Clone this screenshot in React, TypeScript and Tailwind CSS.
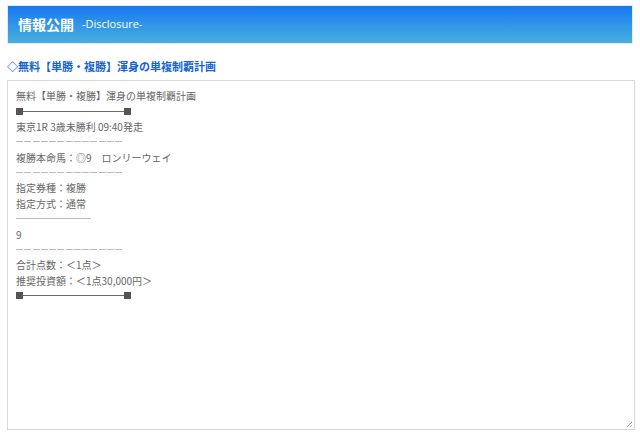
import React from "react";

const jp = { fontFamily: '"Noto Sans CJK JP", "Noto Sans", sans-serif' };

function Dash({ w }: { w: number }) {
  return (
    <div className="flex h-[15.4px] items-center">
      <div className="flex gap-[1.25px]">
        {Array.from({ length: w }).map((_, i) => (
          <span key={i} className="block h-px w-[7px] bg-[#bbbbbb]" />
        ))}
      </div>
    </div>
  );
}

function Solid({ w }: { w: number }) {
  return (
    <div className="flex h-[15.4px] items-center">
      <div className="h-px bg-[#bdbdbd]" style={{ width: w }} />
    </div>
  );
}

function Bar() {
  return (
    <div className="flex h-[15.4px] items-center">
      <span className="block h-[7px] w-[7px] bg-[#555]" />
      <span className="block h-px w-[101px] bg-[#6a6a6a]" />
      <span className="block h-[7px] w-[7px] bg-[#555]" />
    </div>
  );
}

function Line({ children }: { children: React.ReactNode }) {
  return <div className="h-[15.4px] leading-[15.4px] whitespace-pre">{children}</div>;
}

export default function App() {
  return (
    <div className="w-[640px] h-[437px] bg-white pt-[5px] px-[7px]" style={jp}>
      <div className="h-[39px] border border-[#e2ecf6] bg-gradient-to-b from-[#1877f2] to-[#4aaedd] flex items-center pl-[10px]">
        <span className="text-white font-bold text-[14px]">情報公開</span>
        <span className="text-white text-[11px] ml-[8px]" style={{ fontFamily: '"Open Sans", "Noto Sans", sans-serif' }}>-Disclosure-</span>
      </div>
      <div className="mt-[14px] text-[11px] font-bold text-[#1463d6] leading-[16px]">
        ◇無料【単勝・複勝】渾身の単複制覇計画
      </div>
      <div className="mt-[6px] h-[350px] w-[628px] border border-[#d8d8d8] pt-[7px] pl-[8px] text-[10px] text-[#666666] relative">
        <Line>無料【単勝・複勝】渾身の単複制覇計画</Line>
        <Bar />
        <Line>東京1R 3歳未勝利 09:40発走</Line>
        <Dash w={13} />
        <Line>複勝本命馬：◎9　ロンリーウェイ</Line>
        <Dash w={13} />
        <Line>指定券種：複勝</Line>
        <Line>指定方式：通常</Line>
        <Solid w={75} />
        <Line>9</Line>
        <Dash w={13} />
        <Line>合計点数：＜1点＞</Line>
        <Line>推奨投資額：＜1点30,000円＞</Line>
        <Bar />
        <svg className="absolute right-[1px] bottom-[1px]" width="7" height="7" viewBox="0 0 7 7">
          <path d="M6 1 L1 6 M6 4 L4 6" stroke="#aaa" strokeWidth="1" />
        </svg>
      </div>
    </div>
  );
}
